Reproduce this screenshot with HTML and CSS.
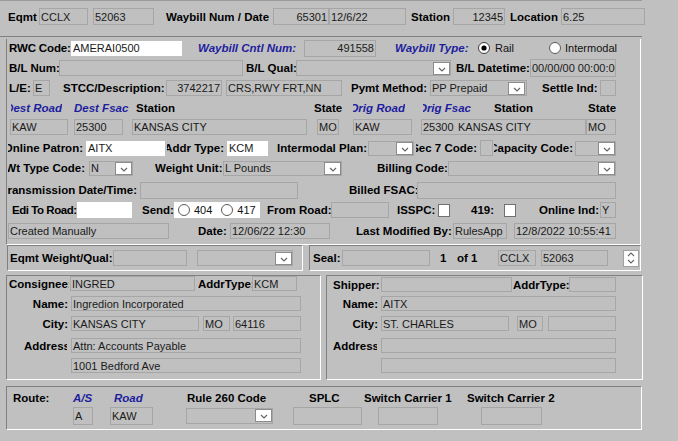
FILE: index.html
```html
<!DOCTYPE html>
<html>
<head>
<meta charset="utf-8">
<title>Waybill</title>
<link rel="stylesheet" href="styles.css">
</head>
<body>
<div class="page">
  <div class="band">
    <div class="row h17 mt7">
      <span class="lbl ml8 w31">Eqmt</span>
      <span class="fld w49 h17">CCLX</span>
      <span class="fld ml5 w61 h17">52063</span>
      <span class="lbl ml12 w107">Waybill Num / Date</span>
      <span class="fld r w56 h17">65301</span>
      <span class="fld w77 h17">12/6/22</span>
      <span class="lbl ml5 w42">Station</span>
      <span class="fld r w52 h17">12345</span>
      <span class="lbl ml5 w51">Location</span>
      <span class="fld w84 h17">6.25</span>
    </div>
  </div>

  <div class="panel main">
    <div class="row mt2">
      <span class="lbl ml2 w62 tight">RWC Code:</span>
      <span class="fld white w111 h15">AMERAI0500</span>
      <span class="lbl blue ml16 w106">Waybill Cntl Num:</span>
      <span class="fld r w72 h17">491558</span>
      <span class="lbl blue ml19 w83">Waybill Type:</span>
      <svg class="radio" viewBox="0 0 12 12"><circle cx="6" cy="6" r="5.5" fill="#fff" stroke="#3a3a3a"/><circle cx="6" cy="6" r="2.6" fill="#000"/></svg>
      <span class="opt ml5 w17">Rail</span>
      <svg class="radio ml37" viewBox="0 0 12 12"><circle cx="6" cy="6" r="5.5" fill="#fff" stroke="#5a5a5a"/></svg>
      <span class="opt ml4">Intermodal</span>
    </div>

    <div class="row mt2">
      <span class="lbl ml2 w50">B/L Num:</span>
      <span class="fld w184 h16"></span>
      <span class="lbl ml3 w50">B/L Qual:</span>
      <span class="fld dd w155 h16"><span class="t"></span><span class="ddb"><svg viewBox="0 0 8 5"><polyline points="1,1 4,4 7,1" fill="none" stroke="#666" stroke-width="1.2"/></svg></span></span>
      <span class="lbl ml5 w74">B/L Datetime:</span>
      <span class="fld w86 h18">00/00/00 00:00:00</span>
    </div>

    <div class="row mt2">
      <span class="lbl ml2 w24">L/E:</span>
      <span class="fld w17 h16">E</span>
      <span class="lbl ml13 w103">STCC/Description:</span>
      <span class="fld r w56 h16">3742217</span>
      <span class="fld ml4 w116 h16">CRS,RWY FRT,NN</span>
      <span class="lbl ml9 w79">Pymt Method:</span>
      <span class="fld dd w97 h16"><span class="t">PP Prepaid</span><span class="ddb mr1"><svg viewBox="0 0 8 5"><polyline points="1,1 4,4 7,1" fill="none" stroke="#666" stroke-width="1.2"/></svg></span></span>
      <span class="lbl ml15 w58">Settle Ind:</span>
      <span class="fld w16 h16"></span>
    </div>

    <div class="row mt2">
      <span class="lbl blue clipr ml4 w51"><span>Dest Road</span></span>
      <span class="lbl blue ml12 w50">Dest Fsac</span>
      <span class="lbl ml12 w40">Station</span>
      <span class="lbl ml138 w28">State</span>
      <span class="lbl blue clipr ml11 w52"><span>Orig Road</span></span>
      <span class="lbl blue clipr ml18 w48"><span>Orig Fsac</span></span>
      <span class="lbl ml23 w37">Station</span>
      <span class="lbl ml57 w28">State</span>
    </div>

    <div class="row mt1">
      <span class="fld ml3 w58 h16">KAW</span>
      <span class="fld ml6 w49 h16">25300</span>
      <span class="fld ml9 w175 h16">KANSAS CITY</span>
      <span class="fld ml10 w22 h16">MO</span>
      <span class="fld ml14 w59 h16">KAW</span>
      <span class="fld ml9 w36 h16 nbr">25300</span>
      <span class="fld w129 h16 nbl">KANSAS CITY</span>
      <span class="fld w30 h16">MO</span>
    </div>

    <div class="row mt3">
      <span class="lbl clipr ml1 w75"><span>Online Patron:</span></span>
      <span class="fld white ml3 w79 h15">AITX</span>
      <span class="lbl clipr ml2 w57"><span>Addr Type:</span></span>
      <span class="fld white ml3 w41 h15">KCM</span>
      <span class="lbl ml9 w91">Intermodal Plan:</span>
      <span class="fld dd w46 h15"><span class="t"></span><span class="ddb"><svg viewBox="0 0 8 5"><polyline points="1,1 4,4 7,1" fill="none" stroke="#666" stroke-width="1.2"/></svg></span></span>
      <span class="lbl clipr ml2 w61"><span>Sec 7 Code:</span></span>
      <span class="fld ml3 w13 h16"></span>
      <span class="lbl clipr ml1 w79"><span>Capacity Code:</span></span>
      <span class="fld dd ml2 w41 h15"><span class="t"></span><span class="ddb"><svg viewBox="0 0 8 5"><polyline points="1,1 4,4 7,1" fill="none" stroke="#666" stroke-width="1.2"/></svg></span></span>
    </div>

    <div class="row mt2">
      <span class="lbl clipr ml1 w77"><span>Wt Type Code:</span></span>
      <span class="fld dd ml4 w44 h15"><span class="t">N</span><span class="ddb"><svg viewBox="0 0 8 5"><polyline points="1,1 4,4 7,1" fill="none" stroke="#666" stroke-width="1.2"/></svg></span></span>
      <span class="lbl ml22 w68">Weight Unit:</span>
      <span class="fld dd w119 h15"><span class="t">L Pounds</span><span class="ddb"><svg viewBox="0 0 8 5"><polyline points="1,1 4,4 7,1" fill="none" stroke="#666" stroke-width="1.2"/></svg></span></span>
      <span class="lbl ml35 w71">Billing Code:</span>
      <span class="fld dd w168 h15"><span class="t"></span><span class="ddb"><svg viewBox="0 0 8 5"><polyline points="1,1 4,4 7,1" fill="none" stroke="#666" stroke-width="1.2"/></svg></span></span>
    </div>

    <div class="row mt4">
      <span class="lbl clipr ml1 w129"><span>Transmission Date/Time:</span></span>
      <span class="fld ml3 w158 h17"></span>
      <span class="lbl ml51 w68">Billed FSAC:</span>
      <span class="fld w199 h17"></span>
    </div>

    <div class="row mt2">
      <span class="lbl ml5 w65 tighter">Edi To Road:</span>
      <span class="fld white w55 h16"></span>
      <span class="lbl ml10 w32">Send:</span>
      <span class="sendbox w86 h16">
        <svg class="radio ml4" viewBox="0 0 12 12"><circle cx="6" cy="6" r="5.5" fill="#fff" stroke="#5a5a5a"/></svg>
        <span class="opt ml4">404</span>
        <svg class="radio ml9" viewBox="0 0 12 12"><circle cx="6" cy="6" r="5.5" fill="#fff" stroke="#5a5a5a"/></svg>
        <span class="opt ml4">417</span>
      </span>
      <span class="lbl ml7 w64">From Road:</span>
      <span class="fld w58 h16"></span>
      <span class="lbl ml8 w41">ISSPC:</span>
      <span class="chk"></span>
      <span class="lbl ml21 w33">419:</span>
      <span class="chk"></span>
      <span class="lbl ml23 w61">Online Ind:</span>
      <span class="fld w16 h16">Y</span>
    </div>

    <div class="row mt3">
      <span class="fld ml1 w161 h16">Created Manually</span>
      <span class="lbl ml29 w32">Date:</span>
      <span class="fld w100 h16">12/06/22 12:30</span>
      <span class="lbl ml26 w97">Last Modified By:</span>
      <span class="fld w54 h16">RulesApp</span>
      <span class="fld ml7 w102 h16">12/8/2022 10:55:41</span>
    </div>
  </div>

  <div class="pair">
    <div class="panel eqmt">
      <span class="lbl ml2 w103">Eqmt Weight/Qual:</span>
      <span class="fld w74 h16"></span>
      <span class="fld dd ml10 w96 h16"><span class="t"></span><span class="ddb"><svg viewBox="0 0 8 5"><polyline points="1,1 4,4 7,1" fill="none" stroke="#666" stroke-width="1.2"/></svg></span></span>
    </div>
    <div class="panel seal">
      <span class="lbl ml3 w29">Seal:</span>
      <span class="fld w88 h16"></span>
      <span class="lbl ml10 w10">1</span>
      <span class="lbl ml7 w20">of 1</span>
      <span class="fld ml21 w38 h16">CCLX</span>
      <span class="fld ml5 w67 h16">52063</span>
      <span class="spin ml15">
        <svg viewBox="0 0 8 5"><polyline points="1,4 4,1 7,4" fill="none" stroke="#666" stroke-width="1.1"/></svg>
        <svg viewBox="0 0 8 5"><polyline points="1,1 4,4 7,1" fill="none" stroke="#666" stroke-width="1.1"/></svg>
      </span>
    </div>
  </div>

  <div class="pair mt4">
    <div class="panel party consignee">
      <div class="row h15">
        <span class="lbl clipl ml2 w60">Consignee:</span>
        <span class="fld ml1 w125 h15">INGRED</span>
        <span class="lbl clipl ml3 w54">AddrType:</span>
        <span class="fld w45 h15">KCM</span>
      </div>
      <div class="row h15 mt5">
        <span class="lbl lcol ml2 w62">Name:</span>
        <span class="fld w230 h15">Ingredion Incorporated</span>
      </div>
      <div class="row h15 mt5">
        <span class="lbl lcol ml2 w62">City:</span>
        <span class="fld w128 h15">KANSAS CITY</span>
        <span class="fld ml4 w27 h15">MO</span>
        <span class="fld ml3 w68 h15">64116</span>
      </div>
      <div class="row h15 mt7">
        <span class="lbl clipl ml17 w43">Address:</span>
        <span class="fld ml4 w230 h15">Attn: Accounts Payable</span>
      </div>
      <div class="row h15 mt5">
        <span class="fld ml64 w230 h15">1001 Bedford Ave</span>
      </div>
    </div>

    <div class="panel party shipper">
      <div class="row h15 mt1">
        <span class="lbl clipl ml6 w48">Shipper:</span>
        <span class="fld w131 h15"></span>
        <span class="lbl clipl ml1 w56">AddrType:</span>
        <span class="fld w47 h15"></span>
      </div>
      <div class="row h15 mt4">
        <span class="lbl lcol w54">Name:</span>
        <span class="fld w235 h15">AITX</span>
      </div>
      <div class="row h15 mt5">
        <span class="lbl lcol w54">City:</span>
        <span class="fld w128 h15">ST. CHARLES</span>
        <span class="fld ml8 w26 h15">MO</span>
        <span class="fld ml5 w68 h15"></span>
      </div>
      <div class="row h15 mt7">
        <span class="lbl clipl ml6 w44">Address:</span>
        <span class="fld ml4 w235 h15"></span>
      </div>
      <div class="row h15 mt5">
        <span class="fld ml54 w235 h15"></span>
      </div>
    </div>
  </div>

  <div class="panel route mt6">
    <div class="row h14 mt4">
      <span class="lbl ml6 w35">Route:</span>
      <span class="lbl blue ml25 w20">A/S</span>
      <span class="lbl blue ml21 w28">Road</span>
      <span class="lbl ml45 w76">Rule 260 Code</span>
      <span class="lbl ml46 w28">SPLC</span>
      <span class="lbl ml27 w86">Switch Carrier 1</span>
      <span class="lbl ml17 w87">Switch Carrier 2</span>
    </div>
    <div class="row h19 mt1">
      <span class="fld ml66 w20 h18">A</span>
      <span class="fld ml17 w43 h18">KAW</span>
      <span class="fld dd ml33 w87 h16"><span class="t"></span><span class="ddb"><svg viewBox="0 0 8 5"><polyline points="1,1 4,4 7,1" fill="none" stroke="#666" stroke-width="1.2"/></svg></span></span>
      <span class="fld ml20 w69 h18"></span>
      <span class="fld ml16 w60 h18"></span>
      <span class="fld ml43 w61 h18"></span>
    </div>
  </div>
</div>
</body>
</html>
```

FILE: styles.css
```css
html, body {
  margin: 0;
  padding: 0;
  background: #c0c0c0;
}
body {
  font-family: "Liberation Sans", Arial, sans-serif;
  color: #000;
  width: 678px;
  height: 441px;
  overflow: hidden;
}
.page {
  width: 678px;
  height: 441px;
}

/* structure */
.band {
  box-sizing: border-box;
  width: 642px;
  height: 37px;
  border-top: 1px solid #9a9a9a;
  border-bottom: 1px solid #808080;
}
.row {
  display: flex;
  align-items: center;
  height: 18px;
}
.panel {
  box-sizing: border-box;
  border-top: 1px solid #808080;
  border-left: 1px solid #808080;
  border-right: 1px solid #fff;
  border-bottom: 1px solid #fff;
}
.main {
  margin-left: 6px;
  width: 635px;
  height: 206px;
  border-top: 0;
}
.pair {
  display: flex;
}
.eqmt {
  display: flex;
  align-items: center;
  margin-left: 7px;
  width: 296px;
  height: 26px;
}
.seal {
  display: flex;
  align-items: center;
  margin-left: 6px;
  width: 332px;
  height: 26px;
}
.party {
  height: 105px;
}
.consignee {
  margin-left: 6px;
  width: 315px;
}
.shipper {
  margin-left: 5px;
  width: 317px;
}
.route {
  margin-left: 6px;
  width: 636px;
  height: 44px;
}

/* labels */
.lbl {
  flex: none;
  font-size: 11.5px;
  font-weight: bold;
  white-space: nowrap;
  line-height: 14px;
}
.lbl.tight {
  letter-spacing: -0.15px;
}
.lbl.tighter {
  letter-spacing: -0.45px;
}
.blue {
  color: #1e1e9e;
  font-style: italic;
}
.clipr {
  display: flex;
  justify-content: flex-end;
  overflow: hidden;
}
.clipr > span {
  flex: none;
}
.clipl {
  overflow: hidden;
}
.lcol {
  text-align: right;
  padding-right: 3px;
  box-sizing: border-box;
}
.opt {
  flex: none;
  font-size: 11px;
  white-space: nowrap;
  color: #111;
}

/* fields */
.fld {
  flex: none;
  box-sizing: border-box;
  border: 1px solid #a6a6a6;
  background: #c0c0c0;
  display: flex;
  align-items: center;
  padding: 0 1px;
  overflow: hidden;
  white-space: nowrap;
  font-size: 11px;
  color: #1a1a1a;
}
.fld.r {
  justify-content: flex-end;
}
.fld.white {
  background: #fff;
  border-color: #fff;
}
.fld.nbr {
  border-right: 0;
}
.fld.nbl {
  border-left: 0;
}
.fld.dd {
  padding-right: 0;
}
.fld .t {
  flex: 1;
  overflow: hidden;
}
.ddb {
  flex: none;
  box-sizing: border-box;
  width: 17px;
  height: 13px;
  background: #fff;
  border: 1px solid #8c8c8c;
  display: flex;
  align-items: flex-end;
  justify-content: center;
  padding-bottom: 2px;
}
.ddb svg {
  width: 8px;
  height: 5px;
}
.ddb.mr1 {
  margin-right: 1px;
}
.sendbox {
  flex: none;
  box-sizing: border-box;
  background: #fff;
  display: flex;
  align-items: center;
}
.radio {
  flex: none;
  width: 12px;
  height: 12px;
}
.chk {
  flex: none;
  box-sizing: border-box;
  width: 12px;
  height: 13px;
  background: #fff;
  border: 1px solid #707070;
}
.spin {
  flex: none;
  box-sizing: border-box;
  width: 16px;
  height: 17px;
  background: #fff;
  border: 1px solid #a0a0a0;
  display: flex;
  flex-direction: column;
  align-items: center;
  justify-content: space-around;
}
.spin svg {
  width: 8px;
  height: 5px;
}

/* heights */
.h14 { height: 14px; }
.h15 { height: 15px; }
.h16 { height: 16px; }
.h17 { height: 17px; }
.h18 { height: 18px; }
.h19 { height: 19px; }

/* top margins */
.mt1 { margin-top: 1px; }
.mt2 { margin-top: 2px; }
.mt3 { margin-top: 3px; }
.mt4 { margin-top: 4px; }
.mt5 { margin-top: 5px; }
.mt6 { margin-top: 6px; }
.mt7 { margin-top: 7px; }

/* left margins */
.ml1 { margin-left: 1px; }
.ml2 { margin-left: 2px; }
.ml3 { margin-left: 3px; }
.ml4 { margin-left: 4px; }
.ml5 { margin-left: 5px; }
.ml6 { margin-left: 6px; }
.ml7 { margin-left: 7px; }
.ml8 { margin-left: 8px; }
.ml9 { margin-left: 9px; }
.ml10 { margin-left: 10px; }
.ml11 { margin-left: 11px; }
.ml12 { margin-left: 12px; }
.ml13 { margin-left: 13px; }
.ml14 { margin-left: 14px; }
.ml15 { margin-left: 15px; }
.ml16 { margin-left: 16px; }
.ml17 { margin-left: 17px; }
.ml18 { margin-left: 18px; }
.ml19 { margin-left: 19px; }
.ml20 { margin-left: 20px; }
.ml21 { margin-left: 21px; }
.ml22 { margin-left: 22px; }
.ml23 { margin-left: 23px; }
.ml25 { margin-left: 25px; }
.ml26 { margin-left: 26px; }
.ml27 { margin-left: 27px; }
.ml29 { margin-left: 29px; }
.ml33 { margin-left: 33px; }
.ml35 { margin-left: 35px; }
.ml37 { margin-left: 37px; }
.ml43 { margin-left: 43px; }
.ml45 { margin-left: 45px; }
.ml46 { margin-left: 46px; }
.ml51 { margin-left: 51px; }
.ml54 { margin-left: 54px; }
.ml57 { margin-left: 57px; }
.ml64 { margin-left: 64px; }
.ml66 { margin-left: 66px; }
.ml138 { margin-left: 138px; }

/* widths */
.w10 { width: 10px; }
.w13 { width: 13px; }
.w16 { width: 16px; }
.w17 { width: 17px; }
.w20 { width: 20px; }
.w22 { width: 22px; }
.w24 { width: 24px; }
.w26 { width: 26px; }
.w27 { width: 27px; }
.w28 { width: 28px; }
.w29 { width: 29px; }
.w30 { width: 30px; }
.w31 { width: 31px; }
.w32 { width: 32px; }
.w33 { width: 33px; }
.w35 { width: 35px; }
.w36 { width: 36px; }
.w37 { width: 37px; }
.w38 { width: 38px; }
.w40 { width: 40px; }
.w41 { width: 41px; }
.w42 { width: 42px; }
.w43 { width: 43px; }
.w44 { width: 44px; }
.w45 { width: 45px; }
.w46 { width: 46px; }
.w47 { width: 47px; }
.w48 { width: 48px; }
.w49 { width: 49px; }
.w50 { width: 50px; }
.w51 { width: 51px; }
.w52 { width: 52px; }
.w54 { width: 54px; }
.w55 { width: 55px; }
.w56 { width: 56px; }
.w57 { width: 57px; }
.w58 { width: 58px; }
.w59 { width: 59px; }
.w60 { width: 60px; }
.w61 { width: 61px; }
.w62 { width: 62px; }
.w64 { width: 64px; }
.w65 { width: 65px; }
.w67 { width: 67px; }
.w68 { width: 68px; }
.w69 { width: 69px; }
.w71 { width: 71px; }
.w72 { width: 72px; }
.w74 { width: 74px; }
.w75 { width: 75px; }
.w76 { width: 76px; }
.w77 { width: 77px; }
.w79 { width: 79px; }
.w83 { width: 83px; }
.w84 { width: 84px; }
.w86 { width: 86px; }
.w87 { width: 87px; }
.w88 { width: 88px; }
.w91 { width: 91px; }
.w96 { width: 96px; }
.w97 { width: 97px; }
.w100 { width: 100px; }
.w102 { width: 102px; }
.w103 { width: 103px; }
.w106 { width: 106px; }
.w107 { width: 107px; }
.w111 { width: 111px; }
.w116 { width: 116px; }
.w119 { width: 119px; }
.w125 { width: 125px; }
.w128 { width: 128px; }
.w129 { width: 129px; }
.w131 { width: 131px; }
.w155 { width: 155px; }
.w158 { width: 158px; }
.w161 { width: 161px; }
.w168 { width: 168px; }
.w175 { width: 175px; }
.w184 { width: 184px; }
.w199 { width: 199px; }
.w230 { width: 230px; }
.w235 { width: 235px; }
```
